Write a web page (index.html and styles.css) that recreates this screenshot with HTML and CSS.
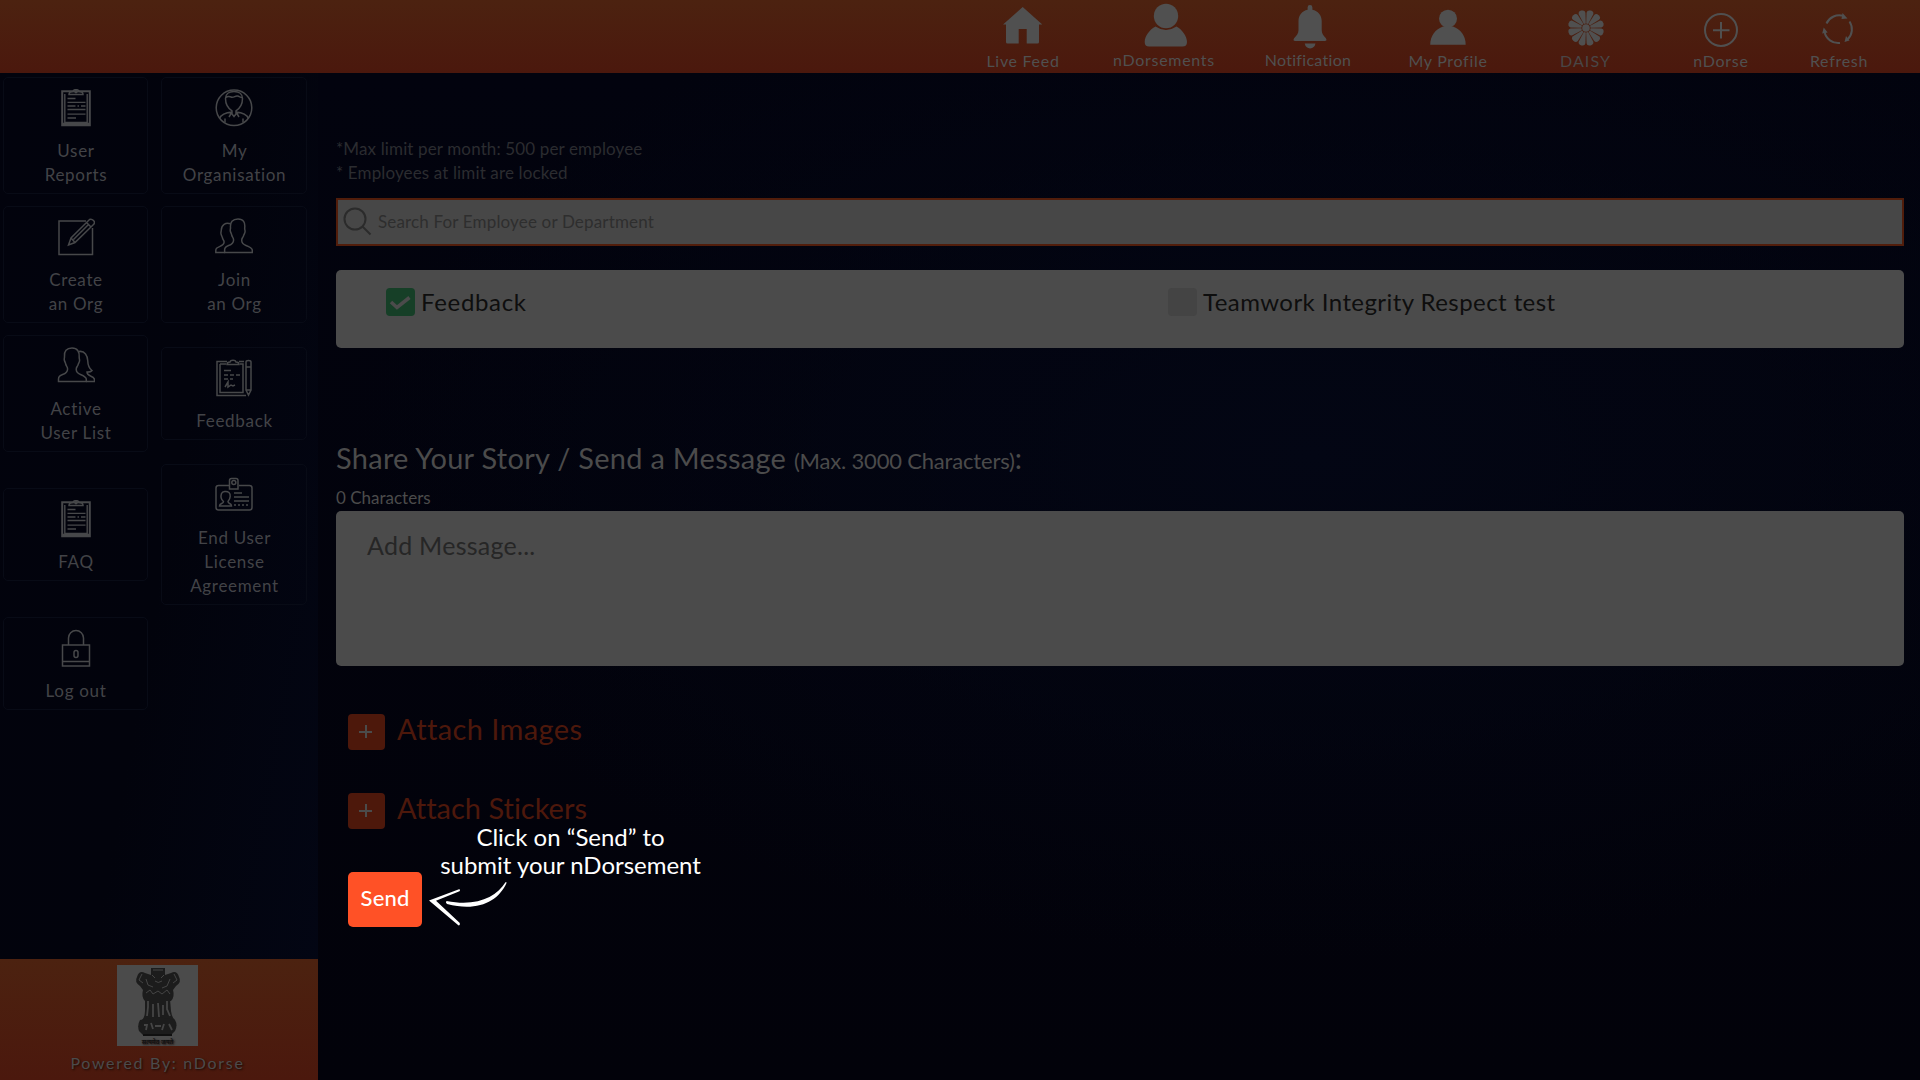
FILE: index.html
```html
<!DOCTYPE html>
<html lang="en">
<head>
<meta charset="utf-8">
<title>nDorse</title>
<link rel="stylesheet" href="styles.css">
</head>
<body>
<svg class="defs" aria-hidden="true">
  <defs>
    <symbol id="clipboard" viewBox="0 0 38 38">
      <path d="M5.2 2.2h27.6v34H5.2z" stroke-width="2"/>
      <path d="M7.8 5v28.5h22.4V5" stroke-width="1.4"/>
      <path d="M5 35h28" stroke-width="2.6"/>
      <path d="M12 5.5c0-2 1.500-3 4-3 .5-2.500 5.500-2.500 6 0 2.500 0 4 1 4 3z" stroke-width="1.500"/>
      <circle cx="19" cy="2.700" r="1"/>
      <path d="M10.500 9.500h8M10.500 13.300h18M10.500 17h8m2 0h1.500m2 0h4.500M10.500 20.500h18M10.500 25.200h18M10.500 29h8.500" stroke-width="1.300"/>
    </symbol>
    <symbol id="couple" viewBox="0 0 38 38">
      <path d="M9.700 34.500H37.300v-2.300c0-2-2.300-3.200-6.300-4.700-3.500-1.300-4.300-3-4.300-5.200 0-2 1-2.500 1.700-4 .4-2 1.700-2.800 1.700-5 0-1-.5-1.700-.4-3.300C30.300 4.500 28.500 1 23 1s-8 3.300-7.500 8.500c.1 1.500-.5 2.200-.2 3.500.3 1.500 1.200 2.600 1.500 4.500.3 1.500 1.800 2.500 1.800 4.500 0 2.500-2 4.500-5 5.500s-4 2.500-4 4.500z"/>
      <path d="M15.500 5.800C10.500 4 6.500 7 6.300 12c-.1 2-.8 2.500-.2 4.300.4 1.500 1 2 1.400 3.700.4 1.700 1.600 2.300 1.600 4 0 2-1.600 3.200-4.100 4.400-3.500 1.600-4.200 2.100-4.200 4.100v2h9"/>
    </symbol>
  </defs>
</svg>

<header class="topbar">
  <nav class="topnav">
    <a class="nav-item"><svg class="nav-icon" viewBox="0 0 60 52"><path d="M29.700 7 10 24.600h3V42q0 1.500 1.500 1.500h11.200V29h8v14.500h10.800q1.500 0 1.500-1.500V24.600h3.300z"/></svg><span class="nav-label">Live Feed</span></a>
    <a class="nav-item raised"><svg class="nav-icon" viewBox="0 0 60 52"><circle cx="32" cy="16" r="12.200"/><path d="M21.500 26.500q10.500 7 21 0C48 29.500 53 36 53 42q0 4.600-4.500 4.600h-33.500q-4.300 0-4.300-4.600c0-6 5-12.500 10.800-15.500z"/></svg><span class="nav-label">nDorsements</span></a>
    <a class="nav-item raised notification"><svg class="nav-icon" viewBox="0 0 60 52"><path d="M29.600 7.500a2.400 2.400 0 0 1 4.800 0v2.300C40 11 43.700 15.500 43.700 21v9c0 3.500 1.800 5.500 4 8q2 3-1 3H17.300q-3 0-1-3c2.200-2.500 4.200-4.500 4.200-8v-9c0-5.500 3.600-10 9.100-11.200zM26.700 43.600h10.800q-1 4.800-5.400 4.800t-5.400-4.800z"/></svg><span class="nav-label">Notification</span></a>
    <a class="nav-item"><svg class="nav-icon" viewBox="0 0 60 52"><circle cx="30" cy="18.700" r="9"/><path d="M25 26.500h10c7.500 2.500 12.700 9.500 12.700 18.300H12.200c0-8.800 5.300-15.800 12.800-18.300z"/></svg><span class="nav-label">My Profile</span></a>
    <a class="nav-item daisy"><svg class="nav-icon" viewBox="-30 -28 60 52">
      <g id="q"><path id="p" transform="rotate(15)" d="M-1-4.500-3.400-15q-.3-3 3.400-3t3.400 3L1-4.500z"/><use href="#p" transform="rotate(30)"/><use href="#p" transform="rotate(60)"/></g>
      <use href="#q" transform="rotate(90)"/><use href="#q" transform="rotate(180)"/><use href="#q" transform="rotate(270)"/><circle r="3.800"/></svg><span class="nav-label">DAISY</span></a>
    <a class="nav-item"><svg class="nav-icon line" viewBox="0 0 60 52"><circle cx="30" cy="30" r="16"/><path d="M30 22v16.500M22 30.300h16.500"/></svg><span class="nav-label">nDorse</span></a>
    <a class="nav-item"><svg class="nav-icon line" viewBox="0 0 60 52"><path d="M17.500 23.500A14 14 0 0 1 34.500 16M40.500 21.500A14 14 0 0 1 38.500 39.500M31 43A14 14 0 0 1 15.500 31.500" /><path class="solid" d="m33.500 13 5 5.500-6 .5zM35.500 42l1.500-6 3.500 4.500zM13.200 33.500l1.500-6 4 5z"/></svg><span class="nav-label">Refresh</span></a>
  </nav>
</header>

<div class="shell">
  <aside class="sidebar">
    <div class="tiles">
      <a class="tile"><svg class="tile-icon"><use href="#clipboard"/></svg><span>User<br>Reports</span></a>
      <a class="tile"><svg class="tile-icon" viewBox="0 0 38 38"><circle cx="19" cy="18.800" r="17.800"/><path d="M19 2.500c-5 0-8.500 2.500-8.500 7 0 5 2.800 10 6.500 12.300V25l2 2.500 2-2.500v-3.200c3.700-2.300 6.500-7.300 6.500-12.300 0-4.500-3.500-7-8.500-7zM11 8.500c2-2 3.500-1 5-.5 3 1 4-1.500 6.500-1 2 .5 3 1.500 4.500 1.500M17 23c-6 .5-10.500 1.500-12.500 6.500M21 23c6 .5 10.500 1.500 12.500 6.500M10 29.500v4M28 29.500v4M17 23l-3 5M21 23l3 5"/></svg><span>My<br>Organisation</span></a>

      <a class="tile"><svg class="tile-icon" viewBox="0 0 38 38"><path d="M29 3H2v33.500h33.500V10"/><path d="m11.500 27 2.500-7L32.500 1.500q2-1 4 1t0 4L18 24.500zM14 20l4 4.500M29.500 4.500l4 4M16.500 21.500l15-15"/></svg><span>Create<br>an Org</span></a>
      <a class="tile"><svg class="tile-icon"><use href="#couple"/></svg><span>Join<br>an Org</span></a>

      <a class="tile"><svg class="tile-icon" viewBox="0 0 38 38"><path d="M1.500 34.500h27.800v-2.300c0-2-2.300-3.200-5.800-4.700-3.500-1.300-4.300-3-4.300-5.200 0-2 1-2.500 1.700-4 .4-2 1.700-2.800 1.700-5 0-1-.5-1.700-.4-3.300C22.500 4.500 20.500 1 15 1S7 4.300 7.500 9.500c.1 1.500-.5 2.200-.2 3.500.3 1.500 1.200 2.600 1.500 4.500.3 1.500 1.800 2.500 1.800 4.500 0 2.500-2 4.500-5 5.500s-4.100 2.500-4.100 4.500z"/><path d="M22 4.500c6-1 8.500 4.500 8.700 9 .2 5 1.300 8 4.300 10-1 1.500-3.500 1.500-5 1.500 0 2 1 3 3.500 4 3 1.200 4 2 4 3.800v1.700h-8.200"/></svg><span>Active<br>User List</span></a>
      <a class="tile"><svg class="tile-icon" viewBox="0 0 38 38"><path d="M31 36.500H2V2.500h10M24 2.500h5M5 5h6M5 5v28.500h23V5h-3" /><path d="M12 5.500c0-2 1-2.500 3-2.500.5-2.500 5.500-2.500 6 0 2 0 3 .5 3 2.500zM31 3q0-1.500 2.500-1.500T36 3v28l-2.500 5-2.500-5zM31 8h5M31 31h5M9 11.500h7M9 16h4m2 0h4m2 0h4M9 20h4m2 0h3M10 28l3-5v5l3-2 2 1 2-1"/></svg><span>Feedback</span></a>

      <a class="tile"><svg class="tile-icon"><use href="#clipboard"/></svg><span>FAQ</span></a>
      <a class="tile"><svg class="tile-icon" viewBox="0 0 38 38"><path d="M14 9.500H3.500q-2.500 0-2.500 2.500v19.500q0 2.500 2.500 2.500h31q2.500 0 2.500-2.500V12q0-2.500-2.500-2.500H24M14.500 4.500q0-2 2-2h4.500q2 0 2 2V13h-8.500z"/><circle cx="18.800" cy="6.500" r="2"/><path d="M4.500 30c0-3 4-2 4-4.500-2.500-2-3-5-2-8 1-2 5-3 7.500-1 2 2 1.500 6-1 9 0 2.500 3.500 1.500 3.500 4.500zM19 17h8M19 21h15M19 25h15M19 29h2m2 0h2m2 0h2m2 0h2"/></svg><span>End User<br>License<br>Agreement</span></a>

      <a class="tile"><svg class="tile-icon" viewBox="0 0 38 38"><path d="M5.500 16h27v21h-27zM5.500 32.500h27M11.500 16V9a7.500 7.500 0 0 1 15 0v7"/><rect x="17" y="21.500" width="4" height="7" rx="2"/></svg><span>Log out</span></a>
    </div>
    <div class="powered">
      <svg class="emblem" viewBox="0 0 81 81">
        <g class="ink">
          <path d="M34 3h14v7l6-2q6-3 8 4 3 5-3 9l-3 4q2 7-2 11h-26q-4-4-2-11l-3-4q-6-4-3-9 2-7 8-4l6 2z"/>
          <path d="M28 34h25l1 12q1 7 4 9H25q3-3 3-9z"/>
          <path d="M23 55q18-5 35 0 3 5 0 11l-4 4H26l-4-4q-2-6 1-11z"/>
        </g>
        <g class="scratch"><path d="M36 5h10M35 10l3 3m6 0 3-3M38 16q3 3 7 0M25 9l-3 6 4 3M57 9l3 6-4 3M29 14l2 6 5 2M53 14l-3 7-5 2M29 28l4-3 3 4 5-3 4 3 5-4 3 4"/><path class="wide" d="M31 36v6l-1 9M36 39v13M41 38l1 14M46 40v10M50 36v8l3 7M27 60h3l-1 5M34 58l2 6M47 59l-2 6M52 59l3 6M38 61h6"/></g>
        <path class="base" d="M26 70h29"/>
        <text x="40.500" y="79" text-anchor="middle">सत्यमेव जयते</text>
      </svg>
      <span>Powered By: nDorse</span>
    </div>
  </aside>

  <main class="content">
    <div class="notes">*Max limit per month: 500 per employee<br>* Employees at limit are locked</div>
    <div class="search"><svg class="search-icon" viewBox="0 0 30 30"><circle cx="12" cy="12" r="10.500"/><path d="m19.500 19.500 8 8"/></svg><span>Search For Employee or Department</span></div>
    <div class="values">
      <label class="value"><span class="check checked"><svg viewBox="0 0 29 28"><path d="m5 14 6 5.500L23.500 9.500"/></svg></span><span class="feedback-name">Feedback</span></label>
      <label class="value"><span class="check"></span><span>Teamwork Integrity Respect test</span></label>
    </div>
    <h2 class="title">Share Your Story / Send a Message <small>(Max. 3000 Characters)</small>:</h2>
    <div class="count">0 Characters</div>
    <div class="message">Add Message...</div>
    <div class="attach images"><span class="plus"></span><span>Attach Images</span></div>
    <div class="attach stickers"><span class="plus"></span><span>Attach Stickers</span></div>
    <button class="send">Send</button>
  </main>
</div>

<div class="hint">Click on “Send” to<br>submit your nDorsement
  <svg class="hint-arrow" viewBox="0 0 80 50"><path d="M80.500 2.300C71 17 52 27 21.500 21q-1.500 1.500.5 3C52 32 73 22 81.500 3q0-1.500-1-.7z"/><path d="M4 20.500 34 9.300q1.800 0 .5 2L11 20.700 34.800 43q.5 3-1.500 2.300z"/></svg>
</div>
</body>
</html>
```
FILE: styles.css
```css
* { box-sizing: border-box; }
body {
  margin: 0;
  height: 1080px;
  display: flex;
  flex-direction: column;
  overflow: hidden;
  background: #02030c;
  color: #4b4b4b;
  font-family: Lato, "Noto Sans", sans-serif;
  font-variant-ligatures: none;
}
.defs { position: absolute; width: 0; height: 0; }

/* top bar */
.topbar {
  flex: none;
  height: 73px;
  display: flex;
  justify-content: flex-end;
  padding-right: 28px;
  background: linear-gradient(#4c2210, #4b180d);
}
.topnav {
  display: grid;
  grid-template-columns: 140px 142px 146px 134px 141px 130px 106px;
}
.nav-item {
  display: flex;
  flex-direction: column;
  align-items: center;
  color: #505050;
}
.nav-icon {
  width: 60px;
  height: 52px;
  fill: currentColor;
  overflow: visible;
}
.nav-icon.line { fill: none; stroke: currentColor; stroke-width: 2; }
.nav-icon .solid { fill: currentColor; stroke: none; }
.nav-label {
  margin-top: -1px;
  font-size: 16px;
  line-height: 20px;
  letter-spacing: .7px;
  white-space: nowrap;
}
.raised .nav-label { margin-top: -2px; }
.notification .nav-label { letter-spacing: .3px; }
.daisy .nav-label { letter-spacing: 1.1px; color: #494646; }

.shell { flex: 1; display: flex; min-height: 0; }

/* sidebar */
.sidebar {
  width: 318px;
  flex: none;
  display: flex;
  flex-direction: column;
  justify-content: space-between;
  background: linear-gradient(100deg, #02030d 0%, #02030c 50%, #030614 100%);
}
.tiles {
  display: grid;
  grid-template-columns: 145px 146px;
  column-gap: 13px;
  row-gap: 12px;
  align-items: center;
  padding: 4px 0 0 3px;
}
.tile {
  display: flex;
  flex-direction: column;
  align-items: center;
  gap: 12px;
  padding: 11px 0 6px;
  border: 1px solid #080b16;
  border-radius: 5px;
  color: #424347;
  font-size: 17px;
  line-height: 24px;
  letter-spacing: .68px;
  text-align: center;
}
.tile span { margin-left: 1px; }
.tile-icon {
  width: 38px;
  height: 38px;
  fill: none;
  stroke: #47484a;
  stroke-width: 1.5;
}
.powered {
  height: 121px;
  display: flex;
  flex-direction: column;
  align-items: center;
  gap: 7px;
  padding: 6px 3px 0 0;
  background: linear-gradient(#4c2210, #4b180d);
  font-size: 16px;
  line-height: 20px;
  letter-spacing: 1.7px;
  text-shadow: 1px 1px 2px #1c0a06;
}
.emblem { width: 81px; height: 81px; background: #4b4b4b; }
.emblem .ink { fill: #1c1c1c; }
.emblem .scratch { fill: none; stroke: #454545; stroke-width: 1; }
.emblem .wide { stroke-width: 1.8; }
.emblem .base { stroke: #101010; stroke-width: 2; }
.emblem text {
  font: 700 6px "Noto Sans", sans-serif;
  letter-spacing: 0;
  fill: #111;
}

/* form */
.content {
  flex: 1;
  display: flex;
  flex-direction: column;
  padding: 64px 16px 0 18px;
  background:
    radial-gradient(ellipse 60% 50% at 62% 38%, #030614, transparent),
    linear-gradient(#02030e, #02020a);
}
.notes {
  font-size: 17px;
  line-height: 24px;
  letter-spacing: .13px;
  color: #2b2c30;
}
.search {
  height: 48px;
  margin-top: 13px;
  display: flex;
  align-items: center;
  gap: 11px;
  padding-left: 5px;
  border: 2px solid #511d0b;
  background: #474747;
  color: #2e2e2e;
  font-size: 17px;
  line-height: 22px;
  letter-spacing: .16px;
}
.search span { padding-bottom: 1px; }
.search-icon { width: 30px; height: 30px; margin-right: -6px; fill: none; stroke: #2b2b2b; stroke-width: 2; }
.values {
  height: 78px;
  margin-top: 24px;
  display: grid;
  grid-template-columns: 782px 1fr;
  align-items: start;
  padding: 16px 0 0 50px;
  border-radius: 5px;
  background: #4b4b4b;
  color: #0e0e0e;
  font-size: 24px;
  line-height: 29px;
  letter-spacing: .43px;
}
.value { display: flex; align-items: center; gap: 6px; }
.feedback-name { letter-spacing: .67px; }
.check {
  width: 29px;
  height: 28px;
  margin-top: 2px;
  display: flex;
  border-radius: 4px;
  background: #444;
}
.check.checked { background: #163f27; }
.check svg { fill: none; stroke: #4b4b4b; stroke-width: 3.6; }
.title {
  margin: 92px 0 0;
  font-size: 29px;
  font-weight: 400;
  line-height: 35px;
  letter-spacing: .27px;
}
.title small { font-size: 22px; line-height: 1; letter-spacing: -.18px; }
.count { margin-top: 11px; font-size: 17px; line-height: 24px; }
.message {
  height: 155px;
  margin-top: 1px;
  padding: 19px 31px;
  border-radius: 5px;
  background: #4b4b4b;
  color: #262626;
  font-size: 25px;
  line-height: 30px;
  letter-spacing: .26px;
}
.attach {
  display: flex;
  gap: 12px;
  height: 36px;
  margin: 48px 0 0 12px;
  color: #4d180b;
  font-size: 29px;
  line-height: 30px;
}
.images { letter-spacing: .4px; }
.stickers { margin-top: 43px; }
.plus {
  width: 37px;
  height: 36px;
  border-radius: 4px;
  background:
    linear-gradient(#4b4b4b, #4b4b4b) 11px 17px / 13px 2px no-repeat,
    linear-gradient(#4b4b4b, #4b4b4b) 17px 11px / 2px 13px no-repeat,
    #4d180b;
}
.send {
  width: 74px;
  height: 55px;
  margin: 43px 0 0 12px;
  padding: 0 0 4px;
  border: 0;
  border-radius: 5px;
  background: #ff5126;
  color: #fff;
  font: 500 22px Lato, sans-serif;
  letter-spacing: .14px;
}

/* walkthrough hint floating above the form */
.hint {
  position: absolute;
  left: 430px;
  top: 823px;
  width: 281px;
  color: #fff;
  font-size: 24px;
  line-height: 28px;
  letter-spacing: -.02px;
  text-align: center;
}
.hint-arrow {
  position: absolute;
  left: -5px;
  top: 57px;
  width: 80px;
  height: 50px;
  fill: #fff;
  overflow: visible;
}
```
